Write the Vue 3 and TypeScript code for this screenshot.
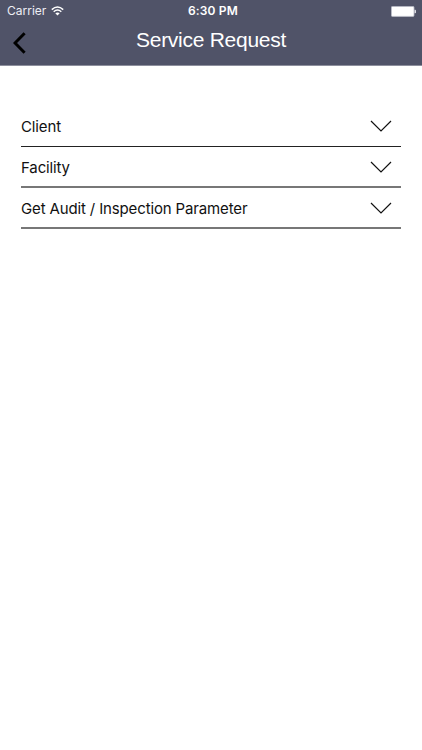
<script setup lang="ts">
const fields: string[] = ['Client', 'Facility', 'Get Audit / Inspection Parameter']
</script>

<template>
  <main class="screen">
    <header class="header">
      <div class="status">
        <div class="carrier">
          <span>Carrier</span>
          <svg class="wifi" width="13" height="10" viewBox="0 0 13 10">
            <path d="M.8 3.6Q6.5-1.6 12.2 3.6M2.7 5.7Q6.5 2.3 10.3 5.7" fill="none" stroke="#fff" stroke-width="1.5" />
            <path d="M4.3 7.3Q6.5 5.5 8.7 7.3L6.5 9.5Z" fill="#fff" />
          </svg>
        </div>
        <time class="clock">6:30 PM</time>
        <svg class="battery" width="25" height="11" viewBox="0 0 25 11">
          <rect x=".4" y=".4" width="22.6" height="10" rx="1" fill="#fff" stroke="#b9bbc6" stroke-width=".8" />
          <path d="M23.5 3.8h.7q.8 0 .8.8v1.8q0 .8-.8.8h-.7z" fill="#dddee5" />
        </svg>
      </div>
      <div class="nav">
        <button class="back" aria-label="Back">
          <svg width="13" height="22" viewBox="0 0 13 22">
            <path d="M11.6 1.2 2 11l9.6 9.8" fill="none" stroke="#000" stroke-width="3" />
          </svg>
        </button>
        <h1 class="title">Service Request</h1>
      </div>
    </header>
    <section class="form">
      <button v-for="field in fields" :key="field" class="field">
        <span>{{ field }}</span>
        <svg class="chevron" width="22" height="12" viewBox="0 0 22 12">
          <path d="M1 1l10 10L21 1" fill="none" stroke="#111" stroke-width="1.2" />
        </svg>
      </button>
    </section>
  </main>
</template>

<style>
body {
  background: #fff;
}
</style>

<style scoped>
.screen {
  min-height: 750px;
  background: #fff;
  font-family: Inter, sans-serif;
}
.header {
  box-sizing: border-box;
  height: 66px;
  background: #505368;
  border-bottom: 1px solid #8d8f9d;
  color: #fff;
}
.status {
  display: grid;
  grid-template-columns: 1fr auto 1fr;
  align-items: center;
  height: 22px;
  padding: 0 6px 0 7px;
  font-size: 12px;
  line-height: 22px;
}
.carrier {
  display: flex;
  align-items: center;
  gap: 5px;
  color: #eeeef4;
}
.wifi {
  margin-bottom: 1px;
}
.clock {
  padding-left: 3px;
  font-weight: 600;
  font-size: 12px;
  letter-spacing: 0.15px;
}
.battery {
  justify-self: end;
}
.nav {
  display: grid;
  grid-template-columns: 60px 1fr 60px;
  height: 43px;
}
button {
  border: 0;
  background: none;
  font: inherit;
  color: inherit;
  text-align: left;
}
.back {
  display: flex;
  align-items: flex-start;
  padding: 10px 0 0 13px;
}
.back svg {
  display: block;
}
.title {
  margin: 0;
  text-align: center;
  letter-spacing: -0.27px;
  font: 400 21px/36px "Liberation Sans", Arial, sans-serif;
}
.form {
  display: flex;
  flex-direction: column;
  padding: 40px 21px 0;
}
.field {
  box-sizing: border-box;
  display: flex;
  align-items: center;
  justify-content: space-between;
  height: 41px;
  padding: 0 9px 0 0;
  border-bottom: 1px solid #222;
  color: #111;
  font-size: 15px;
  letter-spacing: -0.14px;
}
.field:nth-child(n + 2) {
  border-bottom: 2px solid #777;
}
.field:nth-child(2) {
  height: 41px;
  padding-top: 1px;
}
.field:last-child {
  padding-top: 1px;
}
</style>
